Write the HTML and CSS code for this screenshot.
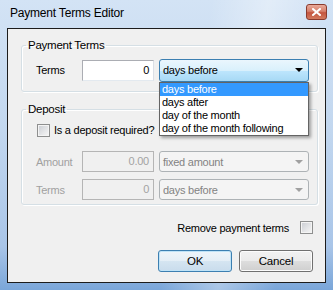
FILE: index.html
```html
<!DOCTYPE html>
<html lang="en">
  <head>
    <meta charset="UTF-8" />
    <title>Payment Terms Editor</title>
    <link rel="stylesheet" href="styles.css">
  </head>
  <body>
    <div class="window">
      <div class="titlebar">
        <span class="title">Payment Terms Editor</span>
        <span class="close" aria-label="Close">
          <svg width="9" height="8" viewBox="0 0 9 8">
            <path d="M1 1 L8 7 M8 1 L1 7" stroke="#fff" stroke-width="2" stroke-linecap="square" />
          </svg>
        </span>
      </div>

      <div class="client">
        <fieldset class="group terms-group">
          <legend>Payment Terms</legend>
          <div class="row">
            <span class="lbl">Terms</span>
            <div class="textbox">0</div>
            <div class="combo-wrap">
              <div class="combo hot">
                <span>days before</span>
                <span class="arrow"></span>
              </div>
              <ul class="droplist">
                <li class="selected">days before</li>
                <li>days after</li>
                <li>day of the month</li>
                <li>day of the month following</li>
              </ul>
            </div>
          </div>
        </fieldset>

        <fieldset class="group deposit-group">
          <legend>Deposit</legend>
          <div class="check-row">
            <span class="checkbox"></span>
            <span>Is a deposit required?</span>
          </div>
          <div class="row disabled">
            <span class="lbl">Amount</span>
            <div class="textbox">0.00</div>
            <div class="combo">
              <span>fixed amount</span>
              <span class="arrow"></span>
            </div>
          </div>
          <div class="row disabled">
            <span class="lbl">Terms</span>
            <div class="textbox">0</div>
            <div class="combo">
              <span>days before</span>
              <span class="arrow"></span>
            </div>
          </div>
        </fieldset>

        <div class="remove-row">
          <span>Remove payment terms</span>
          <span class="checkbox"></span>
        </div>

        <div class="buttons">
          <button class="btn default">OK</button>
          <button class="btn">Cancel</button>
        </div>
      </div>
    </div>
  </body>
</html>
```

FILE: styles.css
```css
* {
  margin: 0;
  padding: 0;
  box-sizing: border-box;
}
body {
  width: 333px;
  height: 290px;
  overflow: hidden;
  font-family: "Liberation Sans", Arial, sans-serif;
  font-size: 11px;
  letter-spacing: -0.25px;
  color: #000;
  background: linear-gradient(to bottom, #d3e3f5 0%, #c2d7ef 45%, #a9c5e8 85%, #7aa6d9 100%);
}
ul {
  list-style: none;
}

/* Window frame */
.window {
  height: 290px;
  display: flex;
  flex-direction: column;
  padding: 0 7px 7px 7px;
  background: linear-gradient(100deg, rgba(255, 255, 255, 0) 55%, rgba(255, 255, 255, 0.35) 70%, rgba(255, 255, 255, 0) 85%);
}
.titlebar {
  height: 28px;
  display: flex;
  justify-content: space-between;
  align-items: flex-start;
}
.title {
  font-size: 12px;
  letter-spacing: -0.2px;
  margin: 6px 0 0 3px;
  color: #000;
}
.close {
  width: 21px;
  height: 16px;
  margin: 4px -1px 0 0;
  display: flex;
  align-items: center;
  justify-content: center;
  border: 1px solid #8a3b2e;
  border-radius: 3px;
  background: linear-gradient(to bottom, #e9a99a 0%, #d6806c 45%, #c4553f 55%, #d27a5e 100%);
}

.client {
  flex: 1;
  border: 1px solid #1c1c1c;
  background: #f0f0f0;
  padding: 9px 7px 0 13px;
}

/* Group boxes */
.group {
  border: 1px solid #d5dfe5;
  border-radius: 3px;
  box-shadow: inset 1px 1px 0 #fff, 1px 1px 0 #fff;
  padding: 0 0 0 14px;
}
.group legend {
  margin-left: -10px;
  padding: 0 2px;
  font-size: 11.5px;
  line-height: 14px;
}
.terms-group {
  padding-bottom: 10px;
}
.deposit-group {
  margin-top: 10px;
  padding-bottom: 4px;
}

.row {
  display: flex;
  align-items: center;
  height: 22px;
  margin-top: 7px;
}
.lbl {
  width: 46px;
}
.textbox {
  width: 72px;
  height: 21px;
  line-height: 19px;
  border: 1px solid #abadb3;
  border-bottom-color: #e3e9ef;
  border-right-color: #dbdfe6;
  background: #fff;
  text-align: right;
  padding-right: 4px;
  margin-right: 5px;
}
.combo-wrap {
  position: relative;
}
.combo {
  width: 150px;
  height: 21px;
  display: flex;
  align-items: center;
  justify-content: space-between;
  padding: 0 5px 0 3px;
  border: 1px solid #adb2b5;
  border-radius: 3px;
  background: #f4f4f4;
  color: #838383;
}
.combo.hot {
  height: 23px;
  border-color: #3c7fb1;
  color: #000;
  background: linear-gradient(to bottom, #eaf6fd 0%, #d9f0fc 50%, #bee6fd 51%, #a7d9f5 100%);
}
.arrow {
  width: 0;
  height: 0;
  border-left: 4px solid transparent;
  border-right: 4px solid transparent;
  border-top: 4px solid #a0a0a0;
}
.combo.hot .arrow {
  border-top-color: #000;
}

/* Open dropdown */
.droplist {
  position: absolute;
  top: 23px;
  left: 0;
  width: 150px;
  background: #fff;
  border: 1px solid #646464;
  box-shadow: 2px 2px 3px rgba(0, 0, 0, 0.35);
  z-index: 10;
}
.droplist li {
  height: 13px;
  line-height: 13px;
  padding-left: 2px;
}
.droplist li.selected {
  background: #3399ff;
  color: #fff;
}

/* Deposit */
.check-row {
  display: flex;
  align-items: center;
  gap: 4px;
  margin-top: 7px;
  padding-left: 1px;
  height: 14px;
}
.row.disabled {
  height: 21px;
}
.deposit-group .row:nth-of-type(2) {
  margin-top: 14px;
}
.row.disabled .lbl {
  color: #a0a0a0;
}
.row.disabled .textbox {
  background: #f0f0f0;
  border-color: #b5b5b5;
  color: #a3a3a3;
}

.checkbox {
  width: 13px;
  height: 13px;
  flex-shrink: 0;
  border: 1px solid #8e8f8f;
  background: linear-gradient(135deg, #c9ccd2 0%, #e6e7e9 60%, #f7f7f7 100%);
  box-shadow: inset 0 0 0 1px #f4f4f4;
}

.remove-row {
  display: flex;
  justify-content: flex-end;
  align-items: center;
  gap: 11px;
  margin-top: 16px;
  padding-right: 5px;
  height: 13px;
}

/* Buttons */
.buttons {
  display: flex;
  justify-content: flex-end;
  gap: 7px;
  margin-top: 16px;
  padding-right: 5px;
}
.btn {
  width: 74px;
  height: 22px;
  font-family: inherit;
  font-size: 11.5px;
  letter-spacing: -0.2px;
  color: #000;
  border: 1px solid #707070;
  border-radius: 3px;
  background: linear-gradient(to bottom, #f2f2f2 0%, #ebebeb 50%, #dddddd 51%, #cfcfcf 100%);
  box-shadow: inset 0 0 0 1px #fcfcfc;
}
.btn.default {
  border-color: #3c7fb1;
  background: linear-gradient(to bottom, #eef5fa 0%, #e4eef6 50%, #d5e5f1 51%, #c9dcec 100%);
  box-shadow: inset 0 0 0 1px #bfe3f7;
}
```
